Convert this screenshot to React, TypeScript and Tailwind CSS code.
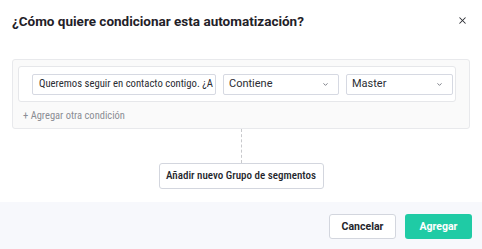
import { X, ChevronDown } from 'lucide-react';

function Select({ label, width }: { label: string; width: string }) {
  return (
    <div
      className={`${width} shrink-0 h-[21px] flex items-center justify-between border border-[#d6d9e2] rounded-[2px] bg-white pl-[5px] pr-[9px] text-[11px] text-[#2b2d33]`}
    >
      <span>{label}</span>
      <ChevronDown className="w-[7px] h-[7px] text-[#6b6f78]" strokeWidth={3} />
    </div>
  );
}

export default function App() {
  return (
    <div className="w-[482px] h-[249px] bg-white flex flex-col font-[Roboto,sans-serif]">
      {/* Cabecera */}
      <div className="flex items-center justify-between pl-[12px] pr-[14px] pt-[11px] h-[30px]">
        <h1 className="text-[13.5px] font-bold text-[#1f2128] leading-[18px] whitespace-nowrap">
          ¿Cómo quiere condicionar esta automatización?
        </h1>
        <X className="w-[11px] h-[11px] text-[#2b2d33]" strokeWidth={2.2} />
      </div>

      {/* Condiciones */}
      <div className="mt-[29px] mx-[12px] h-[70px] border border-[#e8e9ec] rounded-[3px] bg-[#fafafa] pl-[5px] pr-[13px] pt-[6px]">
        <div className="h-[36px] border border-[#e6e7ea] rounded-[3px] bg-white flex items-center gap-[7px] pl-[13px] pr-[5px]">
          <div className="w-[184px] shrink-0 h-[21px] flex items-center border border-[#d6d9e2] rounded-[2px] pl-[6px] text-[10.7px] font-stretch-semi-condensed text-[#2b2d33] overflow-hidden whitespace-nowrap">
            Queremos seguir en contacto contigo. ¿A
          </div>
          <Select label="Contiene" width="w-[116px]" />
          <Select label="Master" width="w-[107px]" />
        </div>
        <p className="mt-[6px] pl-[5px] text-[10.5px] font-stretch-semi-condensed text-[#8a8d94] whitespace-nowrap">
          + Agregar otra condición
        </p>
      </div>

      {/* Conector */}
      <div className="mx-auto w-0 h-[34px] border-l border-dashed border-[#c8c9cc]" />
      <div className="mx-auto w-[165px] h-[26px] flex items-center justify-center border border-[#d3d6de] rounded-[3px] text-[11px] font-medium font-stretch-semi-condensed text-[#23252b] whitespace-nowrap">
        Añadir nuevo Grupo de segmentos
      </div>

      {/* Pie */}
      <div className="mt-auto h-[47px] bg-[#f7f8fc] flex justify-end items-start gap-[9px] pt-[12px] pr-[10px]">
        <button className="w-[67px] h-[25px] bg-white border border-[#d3d6de] rounded-[3px] text-[10.5px] font-bold text-[#23252b]">
          Cancelar
        </button>
        <button className="w-[67px] h-[25px] bg-[#1fcba5] rounded-[3px] text-[10.5px] font-bold text-white">
          Agregar
        </button>
      </div>
    </div>
  );
}
